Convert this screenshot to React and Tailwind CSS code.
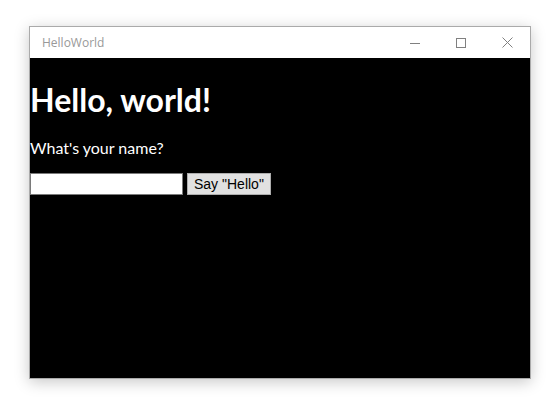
import React, { useState } from 'react';

const TitleBar = () => (
  <div className="h-[31px] bg-white flex items-center justify-between">
    <span className="pl-3 text-[12px] text-[#999999] font-['Open_Sans',sans-serif]">HelloWorld</span>
    <div className="flex h-full">
      <button className="w-[46px] h-full flex items-center justify-center">
        <svg width="10" height="10" viewBox="0 0 10 10">
          <line x1="0" y1="5.5" x2="10" y2="5.5" stroke="#808080" strokeWidth="1" />
        </svg>
      </button>
      <button className="w-[46px] h-full flex items-center justify-center">
        <svg width="10" height="10" viewBox="0 0 10 10">
          <rect x="0.5" y="0.5" width="9" height="9" fill="none" stroke="#808080" strokeWidth="1" />
        </svg>
      </button>
      <button className="w-[46px] h-full flex items-center justify-center">
        <svg width="11" height="11" viewBox="0 0 11 11">
          <path d="M0.5 0.5 L10.5 10.5 M10.5 0.5 L0.5 10.5" stroke="#808080" strokeWidth="1" />
        </svg>
      </button>
    </div>
  </div>
);

export default function App() {
  const [name, setName] = useState('');

  return (
    <div className="w-[556px] h-[410px] bg-white pt-[26px] pl-[29px]">
      <div className="w-[502px] h-[353px] border border-[#aaaaaa] flex flex-col shadow-[0_3px_14px_rgba(0,0,0,0.22)]">
        <TitleBar />
        <div className="flex-1 bg-black text-white font-['Lato',sans-serif]">
          <h1 className="mt-[22px] text-[32px] font-bold leading-[40px]">Hello, world!</h1>
          <p className="mt-[17px] text-[16px] leading-[22px]">What's your name?</p>
          <div className="mt-[14px] flex items-center gap-[4px]">
            <input
              value={name}
              onChange={e => setName(e.target.value)}
              className="w-[153px] h-[22px] bg-white border border-[#7a7a7a] text-black"
            />
            <button className="h-[22px] px-[6px] bg-[#e1e1e1] border border-[#adadad] text-black text-[14px] leading-none font-['Liberation_Sans',Arial,sans-serif]">
              Say "Hello"
            </button>
          </div>
        </div>
      </div>
    </div>
  );
}
